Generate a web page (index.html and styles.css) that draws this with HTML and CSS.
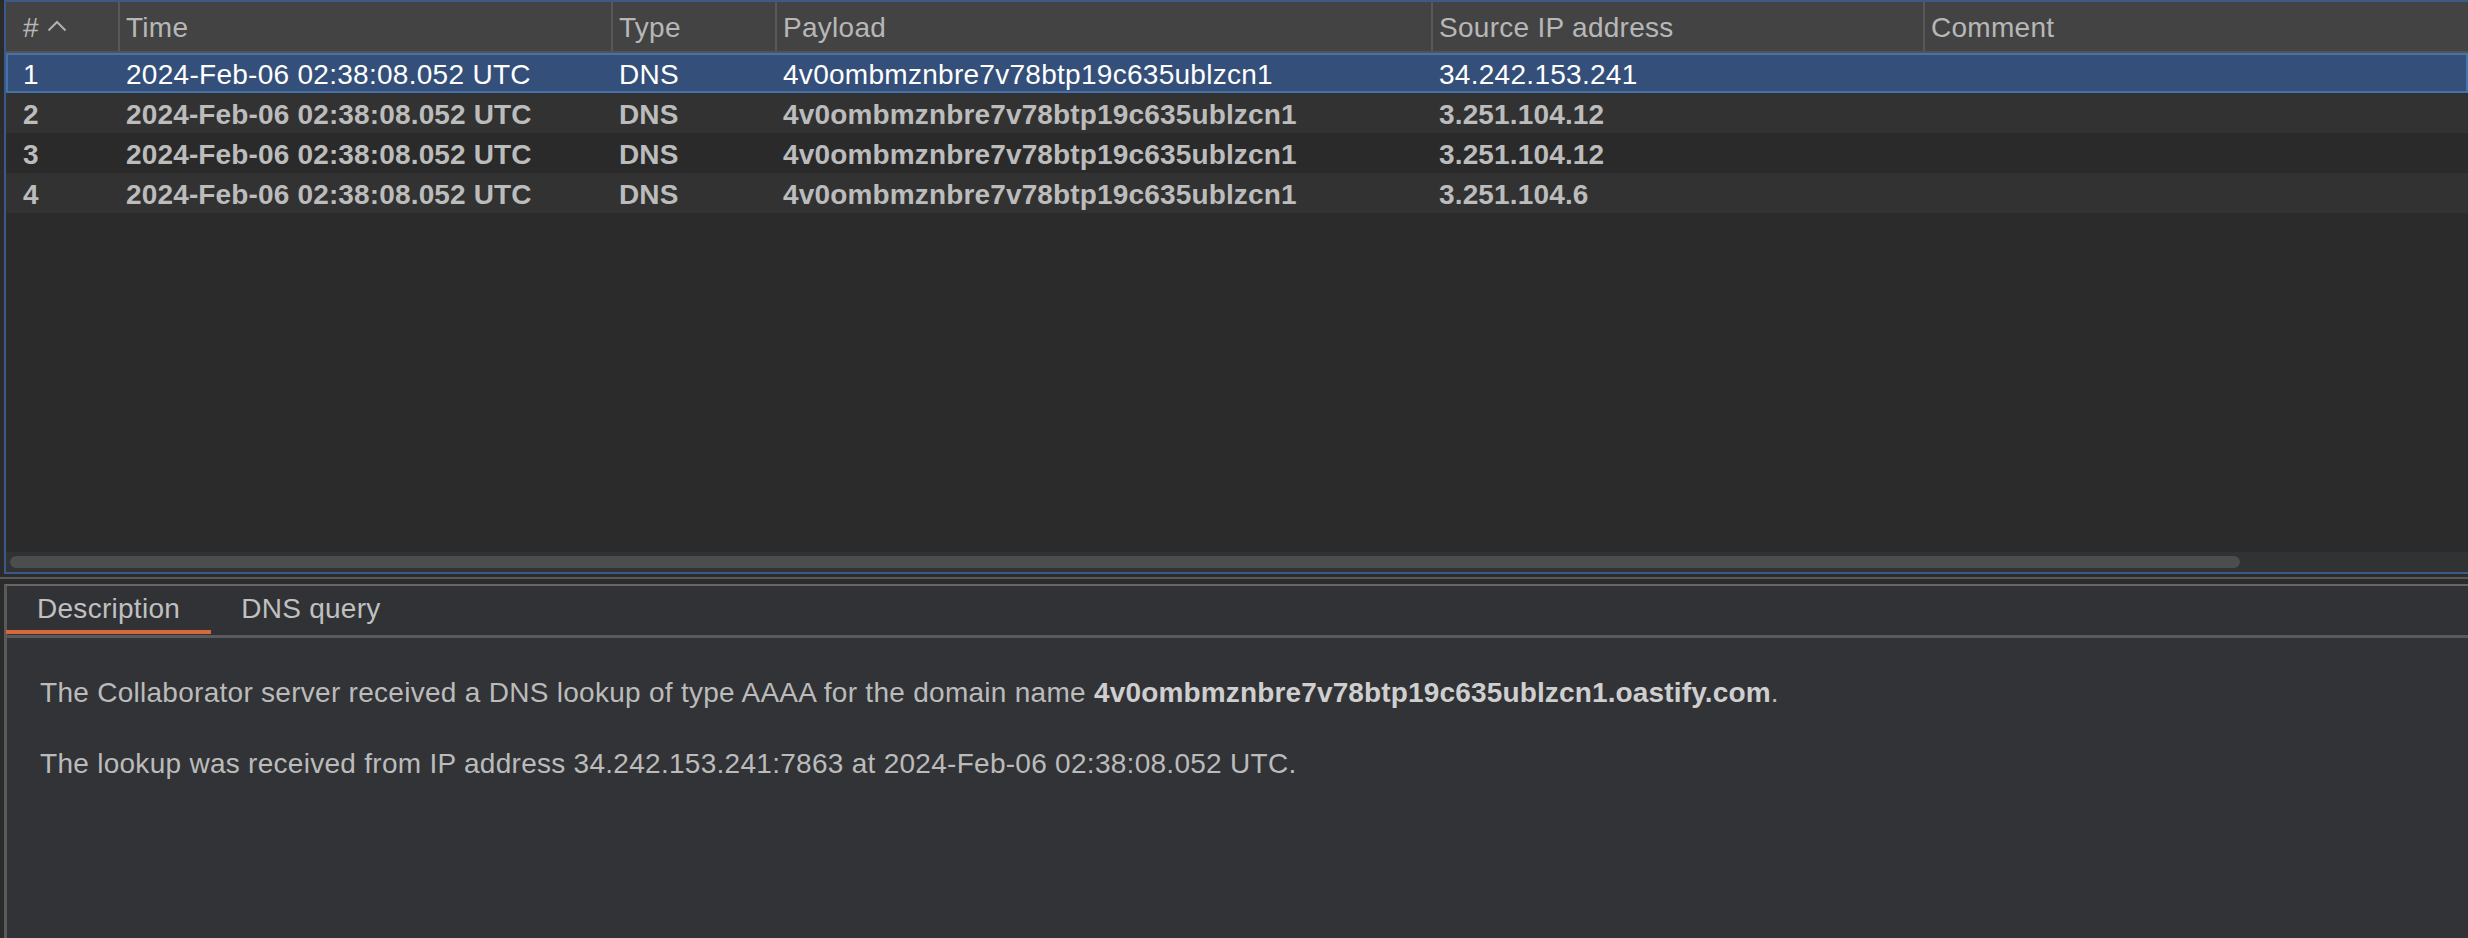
FILE: index.html
```html
<!DOCTYPE html>
<html>
<head>
<meta charset="utf-8">
<link rel="stylesheet" href="styles.css">
</head>
<body>
<div class="app">
  <section class="table-panel">
    <div class="grid header">
      <div class="cell first">#<svg class="sort" width="20" height="12" viewBox="0 0 20 12"><polyline points="1.5,10.5 10,2 18.5,10.5" fill="none" stroke="#b0b0b0" stroke-width="2"/></svg></div>
      <div class="cell sep">Time</div>
      <div class="cell sep">Type</div>
      <div class="cell sep">Payload</div>
      <div class="cell sep">Source IP address</div>
      <div class="cell sep">Comment</div>
    </div>
    <div class="rows">
      <div class="grid row selected">
        <div class="cell first">1</div>
        <div class="cell">2024-Feb-06 02:38:08.052 UTC</div>
        <div class="cell">DNS</div>
        <div class="cell">4v0ombmznbre7v78btp19c635ublzcn1</div>
        <div class="cell">34.242.153.241</div>
        <div class="cell"></div>
      </div>
      <div class="grid row unread odd">
        <div class="cell first">2</div>
        <div class="cell">2024-Feb-06 02:38:08.052 UTC</div>
        <div class="cell">DNS</div>
        <div class="cell">4v0ombmznbre7v78btp19c635ublzcn1</div>
        <div class="cell">3.251.104.12</div>
        <div class="cell"></div>
      </div>
      <div class="grid row unread even">
        <div class="cell first">3</div>
        <div class="cell">2024-Feb-06 02:38:08.052 UTC</div>
        <div class="cell">DNS</div>
        <div class="cell">4v0ombmznbre7v78btp19c635ublzcn1</div>
        <div class="cell">3.251.104.12</div>
        <div class="cell"></div>
      </div>
      <div class="grid row unread odd">
        <div class="cell first">4</div>
        <div class="cell">2024-Feb-06 02:38:08.052 UTC</div>
        <div class="cell">DNS</div>
        <div class="cell">4v0ombmznbre7v78btp19c635ublzcn1</div>
        <div class="cell">3.251.104.6</div>
        <div class="cell"></div>
      </div>
    </div>
    <div class="filler"></div>
    <div class="hscroll"><div class="thumb"></div></div>
  </section>
  <div class="divider"></div>
  <section class="detail-panel">
    <div class="tabs">
      <div class="tab active">Description</div>
      <div class="tab">DNS query</div>
    </div>
    <div class="tab-body">
      <p>The Collaborator server received a DNS lookup of type AAAA for the domain name <b>4v0ombmznbre7v78btp19c635ublzcn1.oastify.com</b>.</p>
      <p>The lookup was received from IP address 34.242.153.241:7863 at 2024-Feb-06 02:38:08.052 UTC.</p>
    </div>
  </section>
</div>
</body>
</html>
```
FILE: styles.css
```css
html, body {
  margin: 0;
  padding: 0;
  height: 100%;
  background: #2b2b2b;
  overflow: hidden;
}
body {
  font-family: "Liberation Sans", Arial, Helvetica, sans-serif;
  font-size: 28px;
  letter-spacing: 0.28px;
  color: #bbbbbb;
}
b {
  letter-spacing: 0.15px;
}
.app {
  display: flex;
  flex-direction: column;
  height: 938px;
}
.table-panel {
  margin-left: 4px;
  height: 570px;
  border: 2px solid #3b5a88;
  border-right: none;
  display: flex;
  flex-direction: column;
  background: #2b2b2b;
}
.grid {
  display: grid;
  grid-template-columns: 112px 493px 164px 656px 492px 1fr;
}
.header {
  height: 49px;
  background: #434343;
  border-bottom: 2px solid #535353;
  color: #b7b7b7;
}
.cell {
  display: flex;
  align-items: center;
  padding-left: 6px;
  padding-top: 3px;
  box-sizing: border-box;
  white-space: nowrap;
  overflow: hidden;
}
.cell.first {
  padding-left: 17px;
}
.header .cell.sep {
  border-left: 2px solid #585858;
  padding-left: 6px;
}
.row .cell:not(.first) {
  padding-left: 8px;
}
.sort {
  margin-left: 8px;
  margin-top: -4px;
}
.rows {
  display: flex;
  flex-direction: column;
}
.row {
  height: 40px;
}
.row.selected {
  background: #34507a;
  box-shadow: inset 0 0 0 2px #4672aa;
  color: #ffffff;
}
.row.unread {
  font-weight: bold;
  letter-spacing: 0.15px;
  color: #bcbcbc;
}
.row.odd {
  background: #323232;
}
.row.even {
  background: #2a2a2a;
}
.filler {
  flex: 1;
}
.hscroll {
  height: 20px;
  background: #313234;
  display: flex;
  align-items: center;
}
.thumb {
  margin-left: 4px;
  width: 2230px;
  height: 12px;
  border-radius: 6px;
  background: #4c4d4f;
}
.divider {
  height: 10px;
  box-sizing: border-box;
  padding-top: 3px;
}
.divider::before {
  content: "";
  display: block;
  height: 2px;
  background: #585858;
}
.detail-panel {
  flex: 1;
  margin-left: 4px;
  border-top: 2px solid #666666;
  border-left: 3px solid #5a5a5a;
  background: #323336;
  display: flex;
  flex-direction: column;
}
.tabs {
  display: flex;
  height: 49px;
  box-sizing: border-box;
  padding-bottom: 1px;
  background: #313235;
}
.tab {
  height: 48px;
  box-sizing: border-box;
  line-height: 46px;
  padding: 0 31px 0 30px;
  color: #c0c0c0;
  border-bottom: 4px solid transparent;
}
.tab.active {
  border-bottom-color: #d46a3b;
  margin-left: -1px;
  padding-left: 31px;
}
.tab-body {
  flex: 1;
  border-top: 3px solid #5a5a5a;
  padding: 39px 0 0 33px;
  color: #bbbbbb;
}
.tab-body p {
  margin: 0 0 39px 0;
  line-height: 32px;
  white-space: nowrap;
}
.tab-body b {
  color: #cfcfcf;
}
```
